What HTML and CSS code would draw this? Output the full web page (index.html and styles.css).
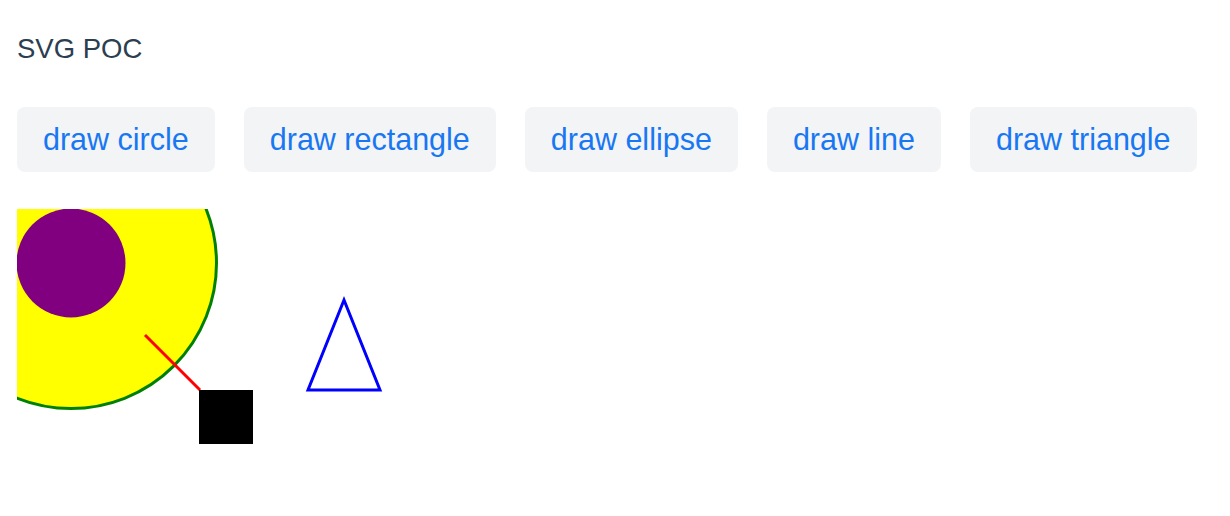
FILE: index.html
```html
<!DOCTYPE html>
<html>
<head>
<meta charset="utf-8">
<link rel="stylesheet" href="styles.css">
</head>
<body>
<div class="app">
  <h1 class="title">SVG POC</h1>
  <div class="toolbar">
    <button class="btn">draw circle</button>
    <button class="btn">draw rectangle</button>
    <button class="btn">draw ellipse</button>
    <button class="btn">draw line</button>
    <button class="btn">draw triangle</button>
  </div>
  <svg class="canvas" width="600" height="300" viewBox="0 0 600 300">
    <circle cx="54" cy="54" r="145.5" fill="#ffff00" stroke="#008000" stroke-width="3"/>
    <circle cx="54" cy="54" r="54.5" fill="#800080"/>
    <line x1="128" y1="126" x2="183" y2="181" stroke="#ff0000" stroke-width="3"/>
    <rect x="182" y="181" width="54" height="54" fill="#000"/>
    <polygon points="327,91 291,181 363,181" fill="none" stroke="#0000ff" stroke-width="3"/>
  </svg>
</div>
</body>
</html>
```
FILE: styles.css
```css
html, body {
  margin: 0;
  padding: 0;
  background: #fff;
}
.app {
  padding: 33px 17px 0 17px;
  font-family: "Liberation Sans", Arial, sans-serif;
}
.title {
  margin: 0;
  font-size: 27.5px;
  font-weight: 400;
  line-height: 31px;
  color: #2c3e50;
}
.toolbar {
  display: flex;
  gap: 29px;
  margin-top: 43px;
}
.btn {
  border: none;
  background: #f3f4f6;
  color: #1877f2;
  font-family: "Liberation Sans", Arial, sans-serif;
  font-size: 30.5px;
  line-height: 35px;
  padding: 15px 26px;
  border-radius: 8px;
}
.canvas {
  display: block;
  margin-top: 37px;
}
```
